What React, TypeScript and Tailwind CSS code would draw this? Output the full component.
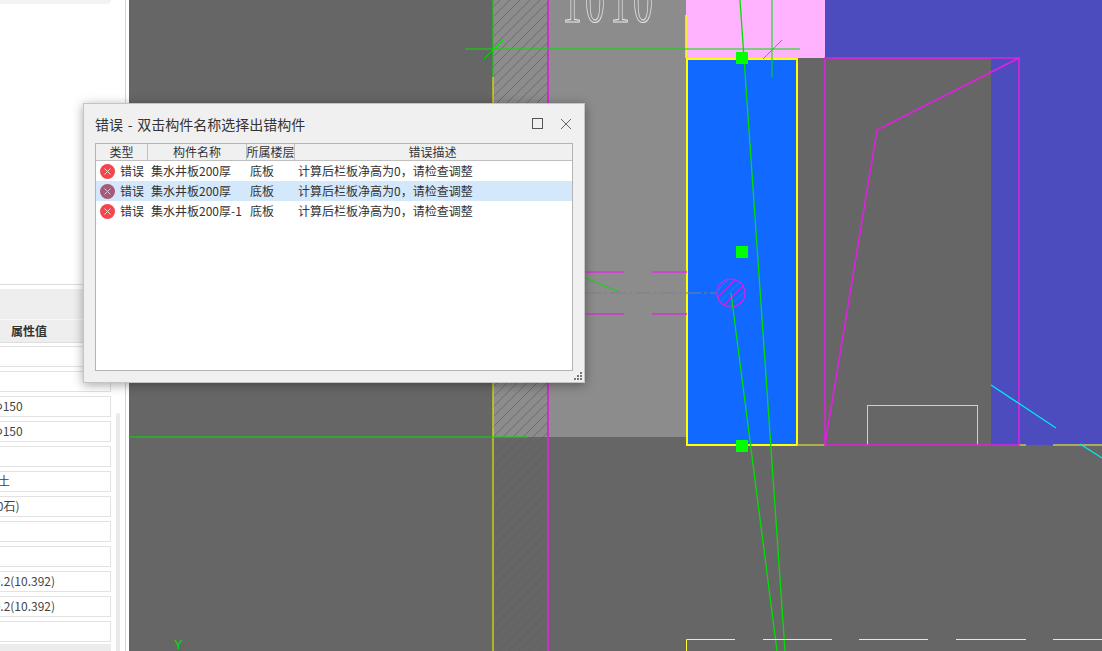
const cjk = { fontFamily: '"Noto Sans CJK SC", "Noto Sans", sans-serif' };

const propRows = [
  { text: '', cls: '' },
  { text: '', cls: '' },
  { text: 'Φ150', cls: '-ml-[7px]' },
  { text: 'Φ150', cls: '-ml-[7px]' },
  { text: '', cls: '' },
  { text: '混凝土', cls: '-ml-[26px]' },
  { text: '(20石)', cls: '-ml-[14px]' },
  { text: '', cls: '' },
  { text: '', cls: '' },
  { text: '10.2(10.392)', cls: '-ml-[13px]' },
  { text: '10.2(10.392)', cls: '-ml-[13px]' },
  { text: '', cls: '' },
];

const errors = [
  { name: '集水井板200厚', selected: false },
  { name: '集水井板200厚', selected: true },
  { name: '集水井板200厚-1', selected: false },
];

function ErrorIcon({ selected }: { selected: boolean }) {
  return (
    <svg width="15" height="15" viewBox="0 0 15 15" className="shrink-0">
      <circle cx="7.5" cy="7.5" r="7.5" fill={selected ? '#a8587a' : '#f5444a'} />
      <path d="M4.5 4.5l6 6M10.5 4.5l-6 6" stroke={selected ? '#d8c8d8' : '#ffdcdc'} strokeWidth="1" />
    </svg>
  );
}

function PropertyPanel() {
  return (
    <aside className="w-[129px] h-full shrink-0 bg-white overflow-hidden">
      <div className="w-[126px] h-full border-r border-[#d4d4d4] flex flex-col">
        <div className="w-[111px] h-[4px] bg-[#f3f3f3] rounded-br-md shrink-0" />
        <div className="h-[281px] border-b border-[#dcdcdc] shrink-0" />
        <div className="h-[4px] shrink-0" />
        <div className="h-[31px] bg-[#eeeeef] border-b border-[#f8f8f8] shrink-0" />
        <div className="h-[23px] bg-[#eeeeef] border-b border-[#dedede] shrink-0 flex items-center pl-[11px] text-xs font-bold text-[#333]">
          属性值
        </div>
        <div className="flex pt-[3px]">
          <div className="w-[111px] shrink-0 flex flex-col gap-[4px]">
            {propRows.map((row, i) => (
              <div
                key={i}
                className="h-[21px] border border-l-0 border-[#e2e2e2] overflow-hidden whitespace-nowrap text-xs leading-[18px] text-[#444]"
              >
                <div className={row.cls}>{row.text}</div>
              </div>
            ))}
            <div className="h-[10px] -mt-[2px] bg-[#ececec]" />
          </div>
          <div className="w-[4px] ml-[5px] mt-[67px] bg-[#e9e9e9] rounded-t-sm" />
        </div>
      </div>
    </aside>
  );
}

// cad view, drawn in page coordinates
function CadCanvas() {
  return (
    <svg viewBox="129 0 973 651" className="flex-1 h-full block">
      <defs>
        <pattern id="hatch" width="10" height="10" patternUnits="userSpaceOnUse">
          <path d="M-3 3L3 -3M0 10L10 0M7 13L13 7" stroke="#6a6a6a" strokeWidth="0.9" />
        </pattern>
        <pattern id="hatchLow" width="10" height="10" patternUnits="userSpaceOnUse">
          <path d="M-3 3L3 -3M0 10L10 0M7 13L13 7" stroke="#606060" strokeWidth="0.9" />
        </pattern>
        <pattern id="hatchCircle" width="7" height="7" patternUnits="userSpaceOnUse">
          <path d="M-2 2L2 -2M0 7L7 0M5 9L9 5" stroke="#e020e0" strokeWidth="1" />
        </pattern>
      </defs>
      <rect x="129" y="0" width="973" height="651" fill="#666666" />
      <rect x="493" y="0" width="193" height="437" fill="#8c8c8c" />
      <rect x="493" y="0" width="55" height="437" fill="url(#hatch)" />
      <rect x="493" y="437" width="55" height="214" fill="url(#hatchLow)" />
      <rect x="686" y="0" width="139" height="58" fill="#ffb3ff" />
      <rect x="825" y="0" width="277" height="58" fill="#4c4cbf" />
      <rect x="991" y="58" width="111" height="387" fill="#4c4cbf" />
      <text
        x="562 585 610 633"
        y="0"
        transform="translate(0 22) scale(1 1.7)"
        fontSize="40"
        fontFamily='"Liberation Serif", serif'
        fill="none"
        stroke="#e4e4e4"
        strokeWidth="0.9"
        vectorEffect="non-scaling-stroke"
      >
        1010
      </text>
      <rect x="687" y="59" width="110" height="386" fill="#1169ff" stroke="#ffff00" strokeWidth="2" />
      <path d="M686 15V58" stroke="#ffff00" strokeWidth="1.5" />
      <path d="M493 77V651" stroke="#e6e600" strokeWidth="1.2" />
      <path d="M548 0V651" stroke="#c832c8" strokeWidth="2" />
      <path d="M797 445H825M1019 445H1026M1053 445H1102" stroke="#c8c83c" strokeWidth="1.5" />
      <path d="M867 445V405H977V445" fill="none" stroke="#d0d0d0" strokeWidth="1" shapeRendering="crispEdges" />
      <path d="M825 445V58H1019V445H825L877 130L1019 58" fill="none" stroke="#e020e0" strokeWidth="1.6" />
      <path d="M991 385L1056 428M1080 444L1102 458" stroke="#00e8f0" strokeWidth="1.3" />
      <path d="M585 272H624M652 272H687" stroke="#e030e0" strokeWidth="1.4" />
      <path d="M585 314H624M652 314H687" stroke="#c83cc8" strokeWidth="1.4" />
      <path d="M585 293H716" stroke="#808088" strokeWidth="1" strokeDasharray="16 3 3 3" />
      <circle cx="731" cy="293" r="14" fill="url(#hatchCircle)" stroke="#e020e0" strokeWidth="1.2" />
      <g stroke="#00e000" strokeWidth="1" fill="none">
        <path d="M465 49H800M493 0V77M772 0V77M484 59L503 40M763 59L782 40" />
        <path d="M129 437H527" />
        <path d="M585 278L620 292" />
        <path d="M740 0L785 651" strokeWidth="1.3" />
        <path d="M731 293L777 651" strokeWidth="1.3" />
      </g>
      <rect x="736" y="52" width="12" height="12" fill="#00ff00" />
      <rect x="736" y="246" width="12" height="12" fill="#00ff00" />
      <rect x="736" y="440" width="12" height="12" fill="#00ff00" />
      <path d="M686.5 651V639.5H735M763 639.5H832M859 639.5H928M956 639.5H1026M1053 639.5H1102" fill="none" stroke="#ffff30" strokeWidth="1" />
      <text x="174" y="649" fontSize="13" fontFamily='"Liberation Sans", sans-serif' fill="#00e000">
        Y
      </text>
    </svg>
  );
}

function ErrorDialog() {
  return (
    <div
      style={cjk}
      className="absolute left-[83px] top-[103px] w-[502px] h-[280px] bg-[#f0f0f0] border border-[#c4c4c4] shadow-[0_2px_10px_rgba(0,0,0,0.35)] flex flex-col px-[11px] pb-[11px]"
    >
      <div className="h-[39px] shrink-0 flex items-center justify-between text-sm text-[#333]">
        <span className="[word-spacing:1.5px]">错误 - 双击构件名称选择出错构件</span>
        <div className="flex items-center gap-[17px] pr-[1px]">
          <svg width="11" height="11" viewBox="0 0 11 11">
            <rect x="0.5" y="0.5" width="10" height="10" fill="none" stroke="#555" />
          </svg>
          <svg width="12" height="12" viewBox="0 0 12 12">
            <path d="M1 1l10 10M11 1L1 11" stroke="#666" strokeWidth="1" />
          </svg>
        </div>
      </div>
      <div className="flex-1 bg-white border border-[#b4b4b4] text-xs leading-none text-[#333] overflow-hidden">
        <div className="h-[17px] bg-[#f0f0f0] border-b border-[#c0c0c0] grid grid-cols-[52px_99px_48px_1fr] items-center">
          <div className="h-full border-r border-[#c0c0c0] flex items-center justify-center">类型</div>
          <div className="h-full border-r border-[#c0c0c0] flex items-center justify-center">构件名称</div>
          <div className="h-full border-r border-[#c0c0c0] flex items-center justify-center whitespace-nowrap">所属楼层</div>
          <div className="h-full flex items-center justify-center pr-[2px]">错误描述</div>
        </div>
        {errors.map((row, i) => (
          <div
            key={i}
            className={`h-[20px] grid grid-cols-[52px_99px_48px_1fr] items-center whitespace-nowrap ${row.selected ? 'bg-[#d3e8fb]' : ''}`}
          >
            <div className="flex items-center gap-[5px] pl-[4px]">
              <ErrorIcon selected={row.selected} />
              <span>错误</span>
            </div>
            <div className="pl-[3px]">{row.name}</div>
            <div className="pl-[3px]">底板</div>
            <div className="pl-[3px]">计算后栏板净高为0，请检查调整</div>
          </div>
        ))}
      </div>
      <svg width="9" height="9" viewBox="0 0 9 9" className="absolute right-[1px] bottom-[1px]" fill="#777">
        <rect x="6" y="0" width="2" height="2" />
        <rect x="3" y="3" width="2" height="2" />
        <rect x="6" y="3" width="2" height="2" />
        <rect x="0" y="6" width="2" height="2" />
        <rect x="3" y="6" width="2" height="2" />
        <rect x="6" y="6" width="2" height="2" />
      </svg>
    </div>
  );
}

export default function App() {
  return (
    <div style={cjk} className="relative flex w-[1102px] h-[651px] overflow-hidden">
      <PropertyPanel />
      <CadCanvas />
      <ErrorDialog />
    </div>
  );
}
